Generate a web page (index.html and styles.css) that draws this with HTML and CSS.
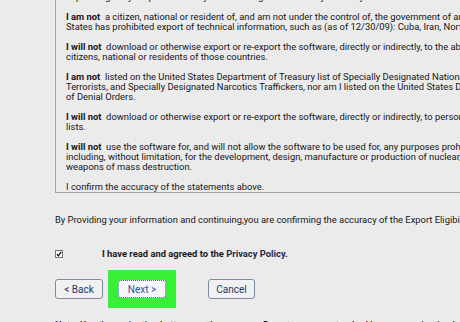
FILE: index.html
```html
<!DOCTYPE html>
<html>
<head>
<meta charset="utf-8">
<link rel="stylesheet" href="styles.css">
</head>
<body>
<div class="page">
  <div class="terms">
    <p>Export Eligibility Requirements. By downloading the software you certify that:</p>
    <p><b>I am not</b>&nbsp; a citizen, national or resident of, and am not under the control of, the government of any country to which the United<br>States has prohibited export of technical information, such as (as of 12/30/09): Cuba, Iran, North Korea, Sudan, Syria.</p>
    <p><b>I will not</b>&nbsp; download or otherwise export or re-export the software, directly or indirectly, to the above mentioned countries nor to<br>citizens, national or residents of those countries.</p>
    <p><b>I am not</b>&nbsp; listed on the United States Department of Treasury list of Specially Designated Nationals and Blocked Persons, Specially<br>Terrorists, and Specially Designated Narcotics Traffickers, nor am I listed on the United States Department of Commerce Table<br>of Denial Orders.</p>
    <p><b>I will not</b>&nbsp; download or otherwise export or re-export the software, directly or indirectly, to persons on the above mentioned<br>lists.</p>
    <p><b>I will not</b>&nbsp; use the software for, and will not allow the software to be used for, any purposes prohibited by United States law,<br>including, without limitation, for the development, design, manufacture or production of nuclear, chemical or biological<br>weapons of mass destruction.</p>
    <p>I confirm the accuracy of the statements above.</p>
  </div>

  <p class="confirm">By Providing your information and continuing,you are confirming the accuracy of the Export Eligibility information above.</p>

  <div class="agree">
    <span class="check"><svg width="8" height="8" viewBox="0 0 8 8"><rect x="0.5" y="0.5" width="7" height="7" fill="#fafafa" stroke="#777"/><path d="M2 4.2 L3.4 5.8 L6.2 1.8" fill="none" stroke="#111" stroke-width="1.3"/></svg></span>
    <span class="agree-text">I have read and agreed to the <span class="link">Privacy Policy</span>.</span>
  </div>

  <div class="buttons">
    <button class="btn">&lt; Back</button>
    <div class="highlight"><button class="btn btn-focus">Next &gt;</button></div>
    <button class="btn btn-cancel">Cancel</button>
  </div>

  <p class="note">Note: Use the navigation buttons on these pages. Do not use your standard browser navigation buttons.</p>
</div>
</body>
</html>
```
FILE: styles.css
```css
html, body {
  margin: 0;
  padding: 0;
  overflow: hidden;
  background: #ebebeb;
}
body {
  width: 460px;
  height: 322px;
  font-family: Roboto, "Noto Sans", sans-serif;
  font-size: 9.4px;
  line-height: 10px;
  color: #161616;
}
.page {
  padding-left: 55px;
  width: 900px;
}
.terms {
  margin-top: -8px;
  border-left: 1px solid #a4a4a4;
  border-bottom: 1px solid #a4a4a4;
  padding: 0 0 0 10px;
  white-space: nowrap;
}
.terms p {
  margin: 0 0 10px 0;
}
.terms p:last-child {
  margin-bottom: 0;
}
.terms b {
  font-weight: 700;
}
.confirm {
  margin: 22px 0 0 0;
  white-space: nowrap;
}
.agree {
  display: flex;
  align-items: center;
  height: 10px;
  margin-top: 24px;
}
.check {
  display: flex;
  width: 8px;
  height: 8px;
}
.agree-text {
  margin-left: 39px;
  font-weight: 700;
  color: #1a1a1a;
}
.link {
  color: #1d2a4a;
}
.buttons {
  display: flex;
  align-items: center;
  margin-top: 11px;
}
.btn {
  font-family: Roboto, "Noto Sans", sans-serif;
  font-size: 10px;
  color: #26366a;
  background: #f1f1f1;
  border: 1px solid #7d8aa6;
  border-radius: 3px;
  width: 48px;
  height: 20px;
  padding: 0;
  box-sizing: border-box;
}
.highlight {
  margin-left: 5px;
  padding: 10px;
  background: #36ef36;
  display: flex;
}
.btn-focus {
  height: 18px;
  background: #f4f6fa;
  border: 1px dotted #4a5a8a;
  color: #3552a6;
}
.btn-cancel {
  margin-left: 32px;
  width: 47px;
}
.note {
  margin: 12px 0 0 0;
  white-space: nowrap;
  font-weight: 500;
}
```
